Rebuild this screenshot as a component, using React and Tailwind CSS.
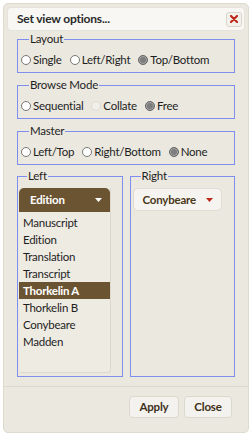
import React from "react";

const font = { fontFamily: "Lato, 'Open Sans', sans-serif" };

function Radio({ label, state }) {
  let dot;
  if (state === "checked") {
    dot = (
      <span className="w-[10px] h-[10px] rounded-full bg-[#7d7d7d] border border-[#666666] shadow-[inset_0_0_0_1px_#a5a5a5]" />
    );
  } else if (state === "disabled") {
    dot = <span className="w-[10px] h-[10px] rounded-full bg-[#f1efea] border border-[#dedbd3]" />;
  } else {
    dot = <span className="w-[10px] h-[10px] rounded-full bg-white border border-[#777777]" />;
  }
  return (
    <span className="flex items-center gap-[2px]">
      {dot}
      <span className="text-[#1e1e1e]">{label}</span>
    </span>
  );
}

function Group({ title, items }) {
  return (
    <fieldset className="border border-[#7d8ef0] mx-[13px] px-[3px] pb-[4px] mt-[6px] first:mt-0">
      <legend className="ml-[8px] px-[1px] text-[11.5px] tracking-[-0.2px] leading-[12px] text-[#1e1e1e]">{title}</legend>
      <div className="flex items-center gap-[8px] h-[16px] mt-[7px] text-[11.5px] tracking-[-0.25px]">
        {items.map((it) => (
          <Radio key={it.label} label={it.label} state={it.state} />
        ))}
      </div>
    </fieldset>
  );
}

const leftItems = [
  "Manuscript",
  "Edition",
  "Translation",
  "Transcript",
  "Thorkelin A",
  "Thorkelin B",
  "Conybeare",
  "Madden",
];

export default function App() {
  return (
    <div className="w-[252px] h-[436px] bg-white p-[3px]" style={font}>
      <div className="w-[246px] h-[430px] bg-[#ebe8df] rounded-[5px] border border-[#dedad0] flex flex-col pt-[3px] px-[3px]">
        <div className="h-[24px] bg-[#f8f7f3] rounded-[4px] border border-[#e6e3dc] flex items-center justify-between pl-[9px] pr-[2px]">
          <span className="text-[12px] tracking-[-0.2px] font-bold text-[#2a2a2a]">Set view options...</span>
          <span className="w-[16px] h-[15px] rounded-[3px] bg-[#f3f1ec] border border-[#d9d5cb] flex items-center justify-center">
            <svg width="8" height="8" viewBox="0 0 8 8">
              <path d="M1 1 L7 7 M7 1 L1 7" stroke="#c0281c" strokeWidth="2.2" strokeLinecap="round" />
            </svg>
          </span>
        </div>
        <div className="-mx-[3px] mt-[2px] flex flex-col">
          <Group
            title="Layout"
            items={[
              { label: "Single", state: "off" },
              { label: "Left/Right", state: "off" },
              { label: "Top/Bottom", state: "checked" },
            ]}
          />
          <Group
            title="Browse Mode"
            items={[
              { label: "Sequential", state: "off" },
              { label: "Collate", state: "disabled" },
              { label: "Free", state: "checked" },
            ]}
          />
          <Group
            title="Master"
            items={[
              { label: "Left/Top", state: "off" },
              { label: "Right/Bottom", state: "off" },
              { label: "None", state: "checked" },
            ]}
          />
          <div className="grid grid-cols-2 gap-[7px] mx-[13px] mt-[5px]">
            <fieldset className="border border-[#7d8ef0] pl-[1px] pr-[11px] pb-[2px] h-[207px]">
              <legend className="ml-[8px] px-[1px] text-[11.5px] tracking-[-0.2px] leading-[12px] text-[#1e1e1e]">Left</legend>
              <div className="mt-[6px] flex flex-col bg-[#eeebe3] border-r border-b border-[#dcd8ce] rounded-b-[3px] h-[185px]">
                <div className="h-[24px] bg-[#6b5431] rounded-t-[5px] flex items-center justify-between pl-[11px] pr-[8px]">
                  <span className="text-[11.5px] tracking-[-0.2px] font-bold text-white">Edition</span>
                  <svg width="7" height="4" viewBox="0 0 7 4">
                    <path d="M0 0 H7 L3.5 4 Z" fill="#ffffff" />
                  </svg>
                </div>
                <div className="pt-[2px] flex flex-col text-[11.5px] tracking-[-0.25px]">
                  {leftItems.map((t) => (
                    <div
                      key={t}
                      className={
                        t === "Thorkelin A"
                          ? "h-[17px] flex items-center pl-[4px] bg-[#6b5431] text-white font-bold"
                          : "h-[17px] flex items-center pl-[4px] text-[#1e1e1e]"
                      }
                    >
                      {t}
                    </div>
                  ))}
                </div>
              </div>
            </fieldset>
            <fieldset className="border border-[#7d8ef0] pl-[2px] pr-[12px] h-[207px]">
              <legend className="ml-[8px] px-[1px] text-[11.5px] tracking-[-0.2px] leading-[12px] text-[#1e1e1e]">Right</legend>
              <div className="mt-[6px] h-[23px] bg-[#f6f4f0] border border-[#e1ddd4] rounded-[5px] flex items-center justify-between pl-[9px] pr-[8px]">
                <span className="text-[11.5px] tracking-[-0.2px] font-bold text-[#4a3818]">Conybeare</span>
                <svg width="7" height="4" viewBox="0 0 7 4">
                  <path d="M0 0 H7 L3.5 4 Z" fill="#c0281c" />
                </svg>
              </div>
            </fieldset>
          </div>
          <div className="mt-[9px] border-t border-[#dcd8ce]" />
          <div className="flex justify-end gap-[5px] pr-[16px] mt-[9px]">
            <button className="h-[22px] w-[50px] bg-[#f4f2ee] border border-[#dcd8ce] rounded-[4px] text-[11.5px] tracking-[-0.2px] font-bold text-[#3e301a]">
              Apply
            </button>
            <button className="h-[22px] w-[48px] bg-[#f4f2ee] border border-[#dcd8ce] rounded-[4px] text-[11.5px] tracking-[-0.2px] font-bold text-[#3e301a]">
              Close
            </button>
          </div>
        </div>
      </div>
    </div>
  );
}
